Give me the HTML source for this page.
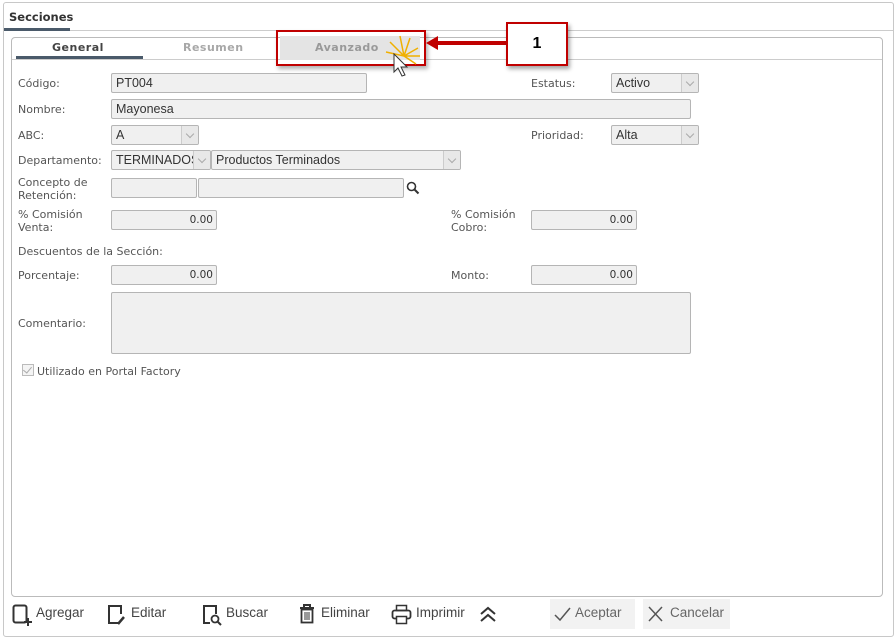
<!DOCTYPE html>
<html><head><meta charset="utf-8"><style>
*{box-sizing:border-box;margin:0;padding:0}
body{width:896px;height:638px;background:#fff;position:relative;overflow:hidden;font-family:"DejaVu Sans","Liberation Sans",sans-serif;font-size:11px;color:#444}
.a{position:absolute}
.lbl{position:absolute;font-size:11px;color:#555;line-height:13px}
.inp{position:absolute;background:#f0f0f0;border:1px solid #b5b5b5;border-radius:2px;height:20px;font-size:12.5px;color:#333;padding-left:4px;line-height:18px;font-family:"Liberation Sans",sans-serif;white-space:nowrap;overflow:hidden}
.num{text-align:right;padding-right:3px;font-family:"DejaVu Sans",sans-serif;font-size:10.5px}
.dd{position:absolute;right:0;top:0;width:17px;height:18px;border-left:1px solid #ccc;background:#e8e8e8}
.dd:after{content:"";position:absolute;left:5px;top:5px;width:5px;height:5px;border-right:1px solid #aaa;border-bottom:1px solid #aaa;transform:rotate(45deg)}
.btn{position:absolute;top:603px;font-family:"Liberation Sans",sans-serif;font-size:13.5px;color:#444;line-height:20px}
</style></head><body>
<div class="a" style="left:3px;top:2px;width:891px;height:635px;border:1px solid #c8c8c8;border-radius:3px"></div>
<div class="a" style="left:4px;top:30px;width:889px;height:1px;background:#ccc"></div>
<div class="a" style="left:9px;top:10px;font-weight:bold;font-size:11.5px;color:#333">Secciones</div>
<div class="a" style="left:4px;top:28px;width:66px;height:3px;background:#4a5a6a"></div>
<div class="a" style="left:11px;top:37px;width:872px;height:560px;border:1px solid #bbb;border-radius:4px"></div>
<div class="a" style="left:12px;top:59px;width:870px;height:1px;background:#ccc"></div>
<div class="a" style="left:52px;top:41px;font-weight:bold;color:#444;letter-spacing:.5px">General</div>
<div class="a" style="left:16px;top:56px;width:127px;height:3px;background:#4a5a6a"></div>
<div class="a" style="left:183px;top:41px;font-weight:bold;color:#a8a8a8;letter-spacing:.5px">Resumen</div>
<div class="a" style="left:280px;top:36px;width:140px;height:24px;background:#e4e4e4"></div>
<div class="a" style="left:315px;top:41px;font-weight:bold;color:#999;letter-spacing:.5px">Avanzado</div>
<div class="a" style="left:276px;top:30px;width:150px;height:36px;border:2px solid #c00000;box-shadow:2px 3px 4px rgba(0,0,0,.3)"></div>
<svg class="a" style="left:380px;top:34px" width="50" height="44"><g stroke="#f0b000" stroke-width="1.5"><path d="M20 2L24 22M10 8L24 22M6 18L24 22M30 4L24 22M38 14L24 22M40 22L24 22M36 30L24 22"/></g><path d="M14 20L14 38L18 34L22 42L25 41L21 33L27 33Z" fill="#fff" stroke="#333"/></svg>
<svg class="a" style="left:424px;top:34px" width="90" height="18"><path d="M2 9L14 2V7H88V11H14V16Z" fill="#c00000"/></svg>
<div class="a" style="left:506px;top:22px;width:62px;height:44px;background:#fff;border:2px solid #c00000;box-shadow:2px 3px 4px rgba(0,0,0,.35);text-align:center;line-height:40px;font-family:'Liberation Sans',sans-serif;font-weight:bold;font-size:16px;color:#000">1</div>

<div class="lbl" style="left:18px;top:77px">Código:</div>
<div class="inp" style="left:111px;top:73px;width:256px">PT004</div>
<div class="lbl" style="left:531px;top:77px">Estatus:</div>
<div class="inp" style="left:611px;top:73px;width:88px">Activo<div class="dd"></div></div>
<div class="lbl" style="left:18px;top:103px">Nombre:</div>
<div class="inp" style="left:111px;top:99px;width:580px">Mayonesa</div>
<div class="lbl" style="left:18px;top:129px">ABC:</div>
<div class="inp" style="left:111px;top:125px;width:88px">A<div class="dd"></div></div>
<div class="lbl" style="left:531px;top:129px">Prioridad:</div>
<div class="inp" style="left:611px;top:125px;width:88px">Alta<div class="dd"></div></div>
<div class="lbl" style="left:18px;top:154px">Departamento:</div>
<div class="inp" style="left:111px;top:150px;width:100px">TERMINADOS<div class="dd"></div></div>
<div class="inp" style="left:211px;top:150px;width:250px">Productos Terminados<div class="dd"></div></div>
<div class="lbl" style="left:18px;top:176px">Concepto de<br>Retención:</div>
<div class="inp" style="left:111px;top:178px;width:86px"></div>
<div class="inp" style="left:198px;top:178px;width:206px"></div>
<svg class="a" style="left:406px;top:181px" width="14" height="14"><circle cx="5.5" cy="5.5" r="4" fill="none" stroke="#333" stroke-width="1.6"/><path d="M8.5 8.5L12.5 12.5" stroke="#333" stroke-width="2"/></svg>
<div class="lbl" style="left:18px;top:208px">% Comisión<br>Venta:</div>
<div class="inp num" style="left:111px;top:210px;width:106px">0.00</div>
<div class="lbl" style="left:451px;top:208px">% Comisión<br>Cobro:</div>
<div class="inp num" style="left:531px;top:210px;width:106px">0.00</div>
<div class="lbl" style="left:18px;top:245px">Descuentos de la Sección:</div>
<div class="lbl" style="left:18px;top:269px">Porcentaje:</div>
<div class="inp num" style="left:111px;top:265px;width:106px">0.00</div>
<div class="lbl" style="left:451px;top:269px">Monto:</div>
<div class="inp num" style="left:531px;top:265px;width:106px">0.00</div>
<div class="lbl" style="left:18px;top:317px">Comentario:</div>
<div class="inp" style="left:111px;top:292px;width:580px;height:62px"></div>
<div class="a" style="left:22px;top:364px;width:12px;height:12px;border:1px solid #bbb;background:#f4f4f4"></div>
<div class="a" style="left:25px;top:365px;width:5px;height:8px;border-right:1px solid #aaa;border-bottom:1px solid #aaa;transform:rotate(40deg)"></div>
<div class="lbl" style="left:37px;top:365px">Utilizado en Portal Factory</div>

<svg class="a" style="left:12px;top:604px" width="22" height="22"><rect x="1.5" y="1.5" width="13" height="17" rx="2" fill="none" stroke="#333" stroke-width="2"/><path d="M16 14V22M12 18H20" stroke="#333" stroke-width="2"/></svg>
<div class="btn" style="left:36px">Agregar</div>
<svg class="a" style="left:106px;top:604px" width="22" height="22"><path d="M13 19H3V2H15V10" fill="none" stroke="#333" stroke-width="2"/><path d="M12 20L18 13" stroke="#333" stroke-width="2.5"/></svg>
<div class="btn" style="left:131px">Editar</div>
<svg class="a" style="left:202px;top:604px" width="22" height="22"><path d="M8 19H2V2H14V10" fill="none" stroke="#333" stroke-width="2"/><circle cx="13" cy="15" r="3.5" fill="none" stroke="#333" stroke-width="1.8"/><path d="M15.5 17.5L19 21" stroke="#333" stroke-width="2"/></svg>
<div class="btn" style="left:226px">Buscar</div>
<svg class="a" style="left:297px;top:603px" width="22" height="22"><path d="M3 5H17M7 5V2H13V5" fill="none" stroke="#333" stroke-width="2"/><rect x="4.5" y="6.5" width="11" height="13" fill="none" stroke="#333" stroke-width="1.8"/><path d="M8 9V17M10 9V17M12 9V17" stroke="#333"/></svg>
<div class="btn" style="left:321px">Eliminar</div>
<svg class="a" style="left:391px;top:604px" width="22" height="22"><rect x="5.5" y="1.5" width="10" height="5" fill="none" stroke="#333" stroke-width="1.5"/><rect x="1.5" y="6.5" width="18" height="8" rx="2" fill="none" stroke="#333" stroke-width="1.8"/><rect x="5.5" y="12.5" width="10" height="7" fill="#fff" stroke="#333" stroke-width="1.5"/></svg>
<div class="btn" style="left:416px">Imprimir</div>
<svg class="a" style="left:478px;top:605px" width="20" height="18"><path d="M3 9L10 3L17 9M3 16L10 10L17 16" fill="none" stroke="#333" stroke-width="2"/></svg>
<div class="a" style="left:550px;top:599px;width:85px;height:30px;background:#f2f2f2"></div>
<svg class="a" style="left:553px;top:605px" width="20" height="18"><path d="M2 10L7 15L17 3" fill="none" stroke="#555" stroke-width="1.5"/></svg>
<div class="btn" style="left:575px;color:#666">Aceptar</div>
<div class="a" style="left:643px;top:599px;width:87px;height:30px;background:#f2f2f2"></div>
<svg class="a" style="left:646px;top:604px" width="20" height="20"><path d="M3 3L16 17M16 3L3 17" stroke="#555" stroke-width="1.5"/></svg>
<div class="btn" style="left:670px;color:#666">Cancelar</div>
</body></html>
